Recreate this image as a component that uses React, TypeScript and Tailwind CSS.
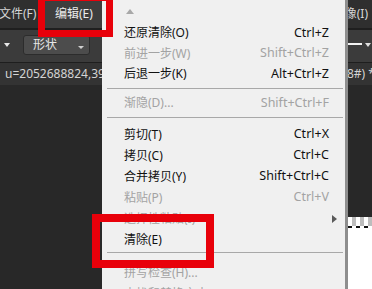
import React from "react";

const FONT = { fontFamily: '"Noto Sans", "Noto Sans CJK SC", sans-serif' };

function Row({
  label,
  sc,
  dim,
  h,
  arrow,
}: {
  label: string;
  sc?: string;
  dim?: boolean;
  h: string;
  arrow?: boolean;
}) {
  return (
    <div
      className={`relative flex shrink-0 items-center justify-between pl-[22px] pr-[16px] text-[12px] leading-none ${h} ${
        dim ? "text-[#a3a3a3]" : "text-[#111111]"
      }`}
    >
      <span className="whitespace-nowrap">{label}</span>
      {sc && <span className="whitespace-nowrap text-[12.5px]">{sc}</span>}
      {arrow && (
        <span className="absolute right-[8px] top-1/2 -translate-y-1/2 h-0 w-0 border-y-[4px] border-l-[5px] border-y-transparent border-l-[#5a5a5a]" />
      )}
    </div>
  );
}

function Sep({ h, mt }: { h: string; mt: string }) {
  return (
    <div className={`shrink-0 ${h}`}>
      <div className={`ml-[5px] mr-[2px] h-px bg-[#a8a8a8] ${mt}`} />
    </div>
  );
}

export default function App() {
  return (
    <div
      className="relative flex h-[289px] w-[372px] overflow-hidden bg-[#282828]"
      style={FONT}
    >
      {/* Left column */}
      <div className="flex w-[102px] shrink-0 flex-col">
        <div className="flex h-[28px] items-center bg-[#2f2f2f]">
          <span className="ml-[-1px] w-[46px] whitespace-nowrap text-[12px] leading-none text-[#d6d6d6]">
            文件(F)
          </span>
          <div className="flex h-[28px] flex-1 items-center bg-[#3e3e3e] pl-[10px] text-[12px] leading-none text-[#ececec]">
            编辑(E)
          </div>
        </div>
        <div className="h-[2px] bg-[#1f1f1f]" />
        <div className="flex h-[32px] items-start bg-[#3b3b3b]">
          <span className="ml-[4px] mt-[13px] h-0 w-0 border-x-[3px] border-t-[4px] border-x-transparent border-t-[#e8e8e8]" />
          <div className="ml-[13px] mt-[5px] flex h-[20px] w-[67px] items-center justify-between rounded-[3px] border border-[#2c2c2c] bg-[#4c4c4c] pl-[9px] pr-[5px]">
            <span className="text-[12px] leading-none text-[#e6e6e6]">形状</span>
            <span className="mt-[4px] h-0 w-0 border-x-[3px] border-t-[3px] border-x-transparent border-t-[#d0d0d0]" />
          </div>
        </div>
        <div className="flex h-[23px] items-center border-t border-[#1e1e1e] bg-[#333333] pl-[5px]">
          <span className="whitespace-nowrap text-[12px] leading-none text-[#d4d4d4]">
            u=2052688824,3950
          </span>
        </div>
        <div className="flex-1 bg-[#282828]" />
      </div>

      {/* Menu */}
      <div className="flex w-[246px] shrink-0 flex-col overflow-hidden border-r-[3px] border-[#8e8e8e] bg-[#f0f0f0]">
        <div className="relative h-[23px] shrink-0">
          <span className="absolute left-[24px] top-[9px] h-0 w-0 border-x-[4.5px] border-b-[5px] border-x-transparent border-b-[#a8a8a8]" />
        </div>
        <Row label="还原清除(O)" sc="Ctrl+Z" h="h-[20px]" />
        <Row label="前进一步(W)" sc="Shift+Ctrl+Z" dim h="h-[21px]" />
        <Row label="后退一步(K)" sc="Alt+Ctrl+Z" h="h-[20px]" />
        <Sep h="h-[9px]" mt="mt-[4px]" />
        <Row label="渐隐(D)..." sc="Shift+Ctrl+F" dim h="h-[20px]" />
        <Sep h="h-[11px]" mt="mt-[4px]" />
        <Row label="剪切(T)" sc="Ctrl+X" h="h-[21px]" />
        <Row label="拷贝(C)" sc="Ctrl+C" h="h-[21px]" />
        <Row label="合并拷贝(Y)" sc="Shift+Ctrl+C" h="h-[21px]" />
        <Row label="粘贴(P)" sc="Ctrl+V" dim h="h-[21px]" />
        <Row label="选择性粘贴(I)" dim arrow h="h-[21px]" />
        <Row label="清除(E)" h="h-[21px]" />
        <Sep h="h-[12px]" mt="mt-[2px]" />
        <Row label="拼写检查(H)..." dim h="h-[21px]" />
        <Row label="查找和替换文本(X)..." dim h="h-[21px]" />
      </div>

      {/* Right strip */}
      <div className="flex w-[24px] shrink-0 flex-col overflow-hidden">
        <div className="flex h-[28px] items-center justify-end bg-[#2f2f2f] pr-[5px]">
          <span className="mr-[-1px] whitespace-nowrap text-[12px] leading-none text-[#d6d6d6]">图像(I)</span>
        </div>
        <div className="h-[2px] bg-[#1f1f1f]" />
        <div className="flex h-[32px] items-start bg-[#3b3b3b]">
          <div className="mt-[13px] h-[2px] w-[14px] bg-[#f2f2f2]" />
          <span className="ml-[3px] mt-[13px] h-0 w-0 border-x-[3px] border-t-[4px] border-x-transparent border-t-[#e0e0e0]" />
        </div>
        <div className="flex h-[23px] items-center border-t border-[#1e1e1e] bg-[#333333]">
          <span className="ml-[-1px] whitespace-nowrap text-[12px] leading-none text-[#d4d4d4]">8#) *</span>
        </div>
        <div className="flex-1 bg-[#282828]" />
        <div className="h-[9px] bg-[#cfcfcf] bg-[repeating-linear-gradient(90deg,#ffffff_0px,#ffffff_4px,#bdbdbd_4px,#bdbdbd_8px)]" />
        <div className="h-[2px] bg-[repeating-linear-gradient(90deg,#111111_0px,#111111_4px,#ffffff_4px,#ffffff_8px)]" />
        <div className="h-[61px] bg-white" />
      </div>

      {/* Red annotation boxes */}
      <div className="pointer-events-none absolute left-[38px] top-[-6px] h-[43px] w-[75px] border-[7px] border-[#e8000a]" />
      <div className="pointer-events-none absolute left-[92px] top-[214px] h-[54px] w-[122px] border-[8px] border-[#e8000a]" />
    </div>
  );
}
